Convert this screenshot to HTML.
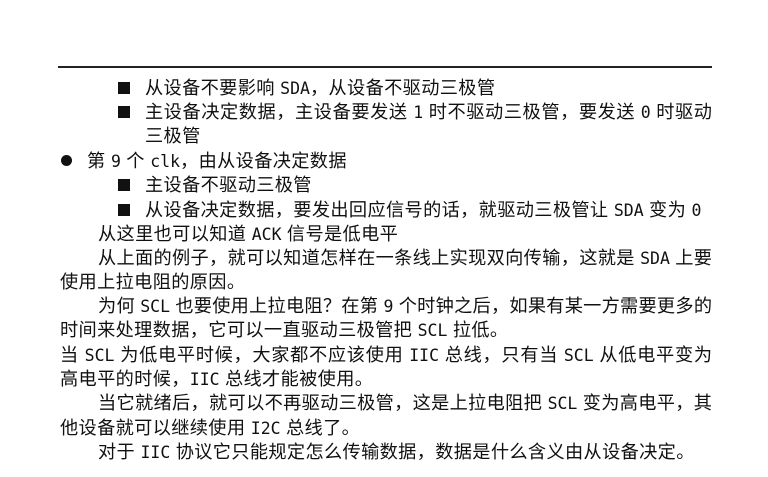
<!DOCTYPE html>
<html><head><meta charset="utf-8"><style>
body{margin:0;width:768px;height:477px;background:#fff;position:relative;overflow:hidden;font-family:"Liberation Sans","Noto Sans CJK SC",sans-serif;font-size:18.2px;color:#111;}
.hr{position:absolute;left:58px;top:66px;width:654px;height:1.5px;background:#222;}
.l{position:absolute;height:24px;line-height:24px;white-space:nowrap;letter-spacing:0.35px;}
.j{text-align:justify;text-align-last:justify;letter-spacing:0;}
.m{font-family:"DejaVu Sans Mono","Liberation Mono",monospace;font-size:16.5px;letter-spacing:0;}
.sq{position:absolute;width:12px;height:12px;background:#111;}
.dot{position:absolute;width:11px;height:11px;border-radius:50%;background:#111;}
</style></head><body>
<div class="hr"></div>
<div class="sq" style="left:118px;top:82px"></div>
<div class="l" style="left:145px;top:76px">从设备不要影响 <span class="m">SDA</span>，从设备不驱动三极管</div>
<div class="sq" style="left:118px;top:106px"></div>
<div class="l j" style="left:145px;top:100px;width:567px">主设备决定数据，主设备要发送 <span class="m">1</span> 时不驱动三极管，要发送 <span class="m">0</span> 时驱动</div>
<div class="l" style="left:145px;top:124px">三极管</div>
<div class="dot" style="left:61px;top:155px"></div>
<div class="l" style="left:87px;top:149px">第 <span class="m">9</span> 个 <span class="m">clk</span>，由从设备决定数据</div>
<div class="sq" style="left:118px;top:179px"></div>
<div class="l" style="left:145px;top:173px">主设备不驱动三极管</div>
<div class="sq" style="left:118px;top:204px"></div>
<div class="l" style="left:145px;top:198px">从设备决定数据，要发出回应信号的话，就驱动三极管让 <span class="m">SDA</span> 变为 <span class="m">0</span></div>
<div class="l" style="left:98px;top:222px">从这里也可以知道 <span class="m">ACK</span> 信号是低电平</div>
<div class="l j" style="left:98px;top:246px;width:614px">从上面的例子，就可以知道怎样在一条线上实现双向传输，这就是 <span class="m">SDA</span> 上要</div>
<div class="l" style="left:60px;top:270px">使用上拉电阻的原因。</div>
<div class="l j" style="left:98px;top:294px;width:614px">为何 <span class="m">SCL</span> 也要使用上拉电阻？在第 <span class="m">9</span> 个时钟之后，如果有某一方需要更多的</div>
<div class="l" style="left:60px;top:318px">时间来处理数据，它可以一直驱动三极管把 <span class="m">SCL</span> 拉低。</div>
<div class="l j" style="left:60px;top:343px;width:652px">当 <span class="m">SCL</span> 为低电平时候，大家都不应该使用 <span class="m">IIC</span> 总线，只有当 <span class="m">SCL</span> 从低电平变为</div>
<div class="l" style="left:60px;top:367px">高电平的时候，<span class="m">IIC</span> 总线才能被使用。</div>
<div class="l j" style="left:98px;top:391px;width:614px">当它就绪后，就可以不再驱动三极管，这是上拉电阻把 <span class="m">SCL</span> 变为高电平，其</div>
<div class="l" style="left:60px;top:416px">他设备就可以继续使用 <span class="m">I2C</span> 总线了。</div>
<div class="l" style="left:98px;top:440px">对于 <span class="m">IIC</span> 协议它只能规定怎么传输数据，数据是什么含义由从设备决定。</div>
</body></html>
